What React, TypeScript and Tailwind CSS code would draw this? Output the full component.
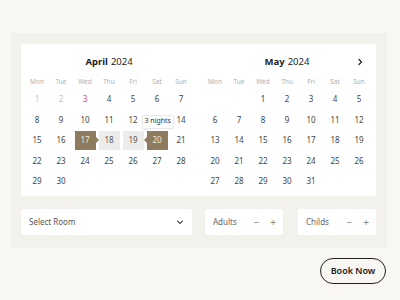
import React from 'react'

const days = ['Mon', 'Tue', 'Wed', 'Thu', 'Fri', 'Sat', 'Sun']

type Cell = { d: number | null; state?: 'past' | 'today' | 'start' | 'end' | 'range' }

function buildMonth(offset: number, count: number, special: Record<number, Cell['state']> = {}) {
  const cells: Cell[] = []
  for (let i = 0; i < offset; i++) cells.push({ d: null })
  for (let d = 1; d <= count; d++) cells.push({ d, state: special[d] })
  return cells
}

const april = buildMonth(0, 30, { 1: 'past', 2: 'past', 3: 'today', 17: 'start', 18: 'range', 19: 'range', 20: 'end' })
const may = buildMonth(2, 31)

function DayCell({ cell }: { cell: Cell }) {
  if (cell.d === null) return <div className="h-[20.5px]" />
  const s = cell.state
  let box = 'text-[#444]'
  if (s === 'past') box = 'text-[#c2c2c2]'
  if (s === 'today') box = 'text-[#e0456a]'
  if (s === 'start' || s === 'end') box = 'bg-[#8c7b5c] text-[#efe9dc]'
  if (s === 'range') box = 'bg-[#ececeb] text-[#555]'
  return (
    <div className="h-[20.5px] flex items-center justify-center">
      <div className={`relative w-[21px] h-[19.5px] flex items-center justify-center text-[8px] ${box}`}>
        {cell.d}
        {s === 'start' && (
          <span className="absolute right-[-3px] top-1/2 -translate-y-1/2 w-0 h-0 border-y-[3px] border-y-transparent border-l-[3px] border-l-[#8c7b5c]" />
        )}
        {s === 'end' && (
          <>
            <span className="absolute left-[-3px] top-1/2 -translate-y-1/2 w-0 h-0 border-y-[3px] border-y-transparent border-r-[3px] border-r-[#8c7b5c]" />
            <span className="absolute left-[-5px] top-[-16px] h-[14px] px-[2px] flex items-center bg-white border border-[#e8e8e8] rounded-[2px] text-[7px] text-[#333] whitespace-nowrap shadow-[0_1px_2px_rgba(0,0,0,0.05)]">
              3 nights
            </span>
          </>
        )}
      </div>
    </div>
  )
}

function Month({ name, year, cells, next }: { name: string; year: string; cells: Cell[]; next?: boolean }) {
  return (
    <div className="w-[168px] relative">
      <div className="h-[12px] flex items-center justify-center text-[9.5px] text-[#1d1d1d]">
        <span className="font-bold">{name}</span>
        <span className="ml-[3px]">{year}</span>
      </div>
      {next && (
        <svg className="absolute right-[7px] top-[2px]" width="8" height="8" viewBox="0 0 8 8" fill="none">
          <path d="M3 1.5 L5.5 4 L3 6.5" stroke="#222" strokeWidth="1.3" strokeLinecap="round" strokeLinejoin="round" />
        </svg>
      )}
      <div className="grid grid-cols-7 mt-[8px] h-[12px] items-center">
        {days.map((d) => (
          <div key={d} className="text-center text-[6.5px] text-[#b0b0b0]">{d}</div>
        ))}
      </div>
      <div className="grid grid-cols-7 mt-[1px]">
        {cells.map((c, i) => (
          <DayCell key={i} cell={c} />
        ))}
      </div>
    </div>
  )
}

function Counter({ label }: { label: string }) {
  return (
    <div className="w-[78px] h-[26px] bg-white rounded-[2px] flex items-center pl-[8px] pr-[7px] text-[8px] text-[#666]">
      <span className="flex-1">{label}</span>
      <span className="text-[#888] text-[10px] leading-none mr-[11px]">−</span>
      <span className="text-[#888] text-[10px] leading-none">+</span>
    </div>
  )
}

export default function App() {
  return (
    <div
      className="w-[400px] h-[300px] bg-[#f8f7f3] pt-[33px] pl-[11px]"
      style={{ fontFamily: '"Noto Sans", "Open Sans", sans-serif' }}
    >
      <div className="w-[376px] bg-[#f3f1eb] pt-[11px] pb-[13px] pl-[10px] pr-[11px]">
        <div className="bg-white rounded-[2px] pt-[12px] pb-[4px] pl-[4px] pr-[5px] flex gap-[10px]">
          <Month name="April" year="2024" cells={april} />
          <Month name="May" year="2024" cells={may} next />
        </div>
        <div className="mt-[13px] flex">
          <div className="w-[171px] h-[26px] bg-white rounded-[2px] flex items-center pl-[8px] pr-[8px] text-[8px] text-[#555]">
            <span className="flex-1">Select Room</span>
            <svg width="8" height="8" viewBox="0 0 8 8" fill="none">
              <path d="M1.5 3 L4 5.5 L6.5 3" stroke="#555" strokeWidth="1.1" strokeLinecap="round" strokeLinejoin="round" />
            </svg>
          </div>
          <div className="ml-[13px]">
            <Counter label="Adults" />
          </div>
          <div className="ml-[15px]">
            <Counter label="Childs" />
          </div>
        </div>
      </div>
      <div className="flex justify-end pr-[14px] mt-[10px]">
        <button className="w-[66px] h-[26px] rounded-full border-[1.5px] border-[#222] text-[9px] font-semibold text-[#222]">
          Book Now
        </button>
      </div>
    </div>
  )
}
